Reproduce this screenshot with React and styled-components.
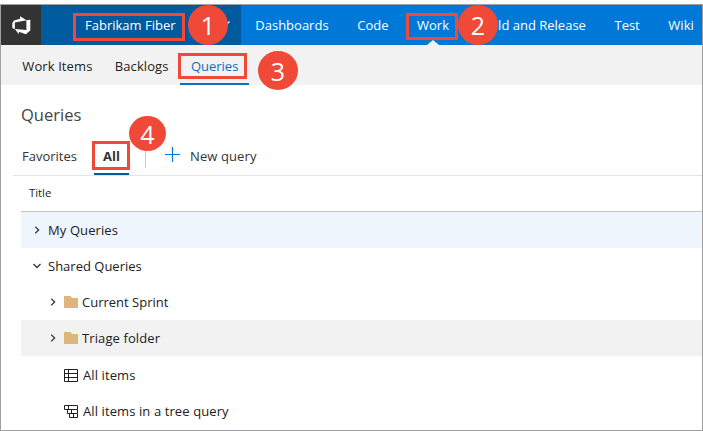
import React from 'react';
import styled, { createGlobalStyle } from 'styled-components';

const GlobalStyle = createGlobalStyle`
  *, *::before, *::after { box-sizing: border-box; }
  body {
    margin: 0;
    background: #fff;
    overflow: hidden;
    font: 13px/20px "Open Sans", "Noto Sans", sans-serif;
    color: #212121;
  }
`;

const Page = styled.div`
  position: relative;
  width: 703px;
  height: 431px;
  padding-top: 4px;
`;

const Window = styled.div`
  height: 427px;
  border: 1px solid #a0a0a0;
  background: #fff;
  overflow: hidden;
  display: flex;
  flex-direction: column;
`;

const TopBar = styled.header`
  display: flex;
  flex: none;
  height: 40px;
  background: #0078d7;
  color: #fff;
`;

const LogoTile = styled.div`
  display: flex;
  align-items: center;
  justify-content: center;
  flex: none;
  width: 40px;
  background: #333;
`;

const ProjectPicker = styled.div`
  display: flex;
  align-items: center;
  justify-content: space-between;
  flex: none;
  width: 200px;
  padding: 0 9px 0 44px;
  background: #005a9e;
`;

const HubNav = styled.nav`
  display: flex;
  align-items: stretch;
  white-space: nowrap;
`;

const Hub = styled.a`
  position: relative;
  display: flex;
  flex: none;
  align-items: center;
  padding: 0 14.3px 0 ${({ $lead = 0 }) => 14.3 + $lead}px;

  &::after {
    content: "";
    display: ${({ $active }) => ($active ? 'block' : 'none')};
    position: absolute;
    left: calc(50% - 6px);
    bottom: 0;
    border: 6px solid transparent;
    border-top: 0;
    border-bottom: 5px solid #f4f4f4;
  }
`;

const SubNav = styled.nav`
  display: flex;
  flex: none;
  height: 40px;
  padding-left: 10px;
  background: #f2f2f2;
`;

const SubLink = styled.a`
  display: flex;
  align-items: center;
  padding: 3px 11px 0 11.3px;
  letter-spacing: ${({ $spacing = 0 }) => $spacing}px;
  color: ${({ $active }) => ($active ? '#106ebe' : '#212121')};
  border-bottom: 2px solid ${({ $active }) => ($active ? '#106ebe' : 'transparent')};
`;

const Heading = styled.h1`
  margin: 0;
  padding: 18px 0 0 20px;
  height: 52px;
  flex: none;
  font-size: 16.5px;
  line-height: 24px;
  font-weight: 400;
  color: #444;
`;

const Tabs = styled.div`
  display: flex;
  flex: none;
  height: 39px;
  margin-left: 12px;
  padding-left: 9px;
  border-bottom: 1px solid #e4e4e4;
`;

const Tab = styled.a`
  display: flex;
  align-items: center;
  justify-content: center;
  height: 38px;
  margin-right: ${({ $active }) => ($active ? 16 : 17)}px;
  border-bottom: 2px solid ${({ $active }) => ($active ? '#005a9e' : 'transparent')};
  width: ${({ $width }) => $width}px;
  font-weight: ${({ $active }) => ($active ? 700 : 400)};
  color: #333;
  padding-top: 1px;
`;

const Divider = styled.span`
  width: 1px;
  height: 24px;
  margin-top: 7px;
  background: #c8c8c8;
`;

const NewQuery = styled.a`
  display: flex;
  align-items: center;
  gap: 9px;
  height: 37px;
  padding: 0 0 0 19px;
  color: #333;
  letter-spacing: 0.1px;
  & > svg { margin-top: -2px; }
`;

const Grid = styled.div`
  margin-left: 20px;
  display: flex;
  flex-direction: column;
`;

const ColumnHeader = styled.div`
  height: 36px;
  padding: 7px 0 0 8px;
  border-bottom: 1px solid #c4c4c4;
  font-size: 11.3px;
  line-height: 20px;
`;

const Row = styled.div`
  display: flex;
  align-items: center;
  height: 36px;
  padding-left: ${({ $indent = 11 }) => $indent}px;
  background: ${({ $tone }) => ({ selected: '#eef5fc', hover: '#f2f2f2' }[$tone] || '#fff')};
  & > svg { flex: none; }
`;

const Queries = styled.div`
  padding-top: 1px;
`;

const RowText = styled.span`
  margin-left: ${({ $gap = 6 }) => $gap}px;
  letter-spacing: ${({ $spacing = 0 }) => $spacing}px;
`;

const ChevronSvg = styled.svg`
  display: block;
  margin-right: ${({ $after = 0 }) => $after}px;
`;

const Highlight = styled.div`
  position: absolute;
  left: ${({ $x }) => $x}px;
  top: ${({ $y }) => $y}px;
  width: ${({ $w }) => $w}px;
  height: ${({ $h }) => $h}px;
  border: 3px solid #f04937;
`;

const Step = styled.div`
  position: absolute;
  left: ${({ $x }) => $x}px;
  top: ${({ $y }) => $y}px;
  width: ${({ $w = 40 }) => $w}px;
  height: ${({ $h = 40 }) => $h}px;
  border-radius: 50%;
  background: #f04937;
  color: #fff;
  display: flex;
  align-items: center;
  justify-content: center;
  font-size: 25px;
  line-height: 26px;
`;

const Logo = () => (
  <svg width="20.6" height="20.6" viewBox="0 0 16 16" fill="#fff">
    <path d="M15 3.622v8.512L11.5 15l-5.425-1.975v1.958L3.004 10.97l8.951.7V4.005L15 3.622zm-2.984.428L6.994 1v2.001L2.382 4.356 1 6.13v4.029l1.978.873V5.869l9.038-1.818z" />
  </svg>
);

const Chevron = ({ open, after }) => (
  <ChevronSvg $after={after} width="10" height="10" viewBox="0 0 10 10" fill="none" stroke="#333" strokeWidth="1.3">
    <path d={open ? 'M1.5 3 5 6.5 8.5 3' : 'M3.2 1.6 6.6 5 3.2 8.4'} />
  </ChevronSvg>
);

const PickerChevron = () => (
  <svg width="10" height="10" viewBox="0 0 10 10" fill="none" stroke="#fff" strokeWidth="1.2">
    <path d="M0 2 3.5 5.5 7.5 1.5" />
  </svg>
);

const Folder = () => (
  <svg width="14" height="12" viewBox="0 0 14 12" fill="#dcb67a">
    <path d="M0 0h6.5l1.5 2h6v10H0z" />
  </svg>
);

const FlatQuery = () => (
  <svg width="14" height="13" viewBox="0 0 14 13" fill="none" stroke="#212121">
    <path d="M.5.5h13v12H.5zM.5 4.5h13M.5 8.5h13M4.5.5v12" />
  </svg>
);

const TreeQuery = () => (
  <svg width="14" height="13" viewBox="0 0 14 13" fill="none" stroke="#212121">
    <path d="M.5.5h13v4H.5zM4.5.5v4M3.5 4.5v4h10v-4M7.5 4.5v4M5.5 8.5v4h8v-4M9.5 8.5v4" />
  </svg>
);

const Plus = () => (
  <svg width="16" height="16" viewBox="0 0 16 16" stroke="#0078d7" strokeWidth="1.2">
    <path d="M7.5 0v15M0 7.5h15" />
  </svg>
);

const hubs = [
  { name: 'Dashboards' },
  { name: 'Code' },
  { name: 'Work', active: true },
  { name: 'ld and Release', lead: 20.5 },
  { name: 'Test' },
  { name: 'Wiki' },
];

export default function App() {
  return (
    <>
      <GlobalStyle />
      <Page>
        <Window>
          <TopBar>
            <LogoTile><Logo /></LogoTile>
            <ProjectPicker>
              Fabrikam Fiber
              <PickerChevron />
            </ProjectPicker>
            <HubNav>
              {hubs.map(({ name, active, lead }) => (
                <Hub key={name} $active={active} $lead={lead}>{name}</Hub>
              ))}
            </HubNav>
          </TopBar>

          <SubNav>
            <SubLink $spacing={0.1}>Work Items</SubLink>
            <SubLink $spacing={0.1}>Backlogs</SubLink>
            <SubLink $active>Queries</SubLink>
          </SubNav>

          <Heading>Queries</Heading>

          <Tabs>
            <Tab $width={55}>Favorites</Tab>
            <Tab $width={35} $active>All</Tab>
            <Divider />
            <NewQuery><Plus />New query</NewQuery>
          </Tabs>

          <Grid>
            <ColumnHeader>Title</ColumnHeader>
            <Row $tone="selected"><Chevron /><RowText $spacing={0.1}>My Queries</RowText></Row>
            <Row><Chevron open /><RowText>Shared Queries</RowText></Row>
            <Row $indent={27}><Chevron after={6} /><Folder /><RowText $gap={4}>Current Sprint</RowText></Row>
            <Row $indent={27} $tone="hover"><Chevron after={6} /><Folder /><RowText $gap={4} $spacing={0.1}>Triage folder</RowText></Row>
            <Queries>
              <Row $indent={43}><FlatQuery /><RowText $gap={5} $spacing={0.1}>All items</RowText></Row>
              <Row $indent={43}><TreeQuery /><RowText $gap={5} $spacing={0.1}>All items in a tree query</RowText></Row>
            </Queries>
          </Grid>
        </Window>

        <Highlight $x={73} $y={13} $w={112} $h={28} />
        <Highlight $x={406} $y={13} $w={52} $h={27} />
        <Highlight $x={178} $y={53} $w={69} $h={26} />
        <Highlight $x={92} $y={141} $w={38} $h={29} />
        <Step $x={188} $y={5}>1</Step>
        <Step $x={458} $y={5}>2</Step>
        <Step $x={258} $y={51} $h={39}>3</Step>
        <Step $x={129} $y={116} $w={37} $h={35}>4</Step>
      </Page>
    </>
  );
}
